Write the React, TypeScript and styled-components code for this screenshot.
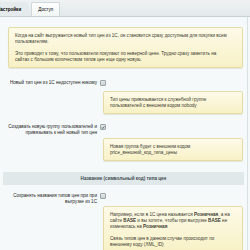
import React, { FC } from 'react'
import styled, { createGlobalStyle } from 'styled-components'

const Global = createGlobalStyle`
  html, body {
    margin: 0;
    padding: 0;
    background: #f5f9f9;
    font-family: "Liberation Sans", Arial, sans-serif;
  }
`

const Page = styled.div`
  width: 250px;
  height: 250px;
  overflow: hidden;
  background: #f5f9f9;
`

const TabBar = styled.div`
  display: flex;
  align-items: flex-end;
  gap: 3px;
  height: 16px;
  background: linear-gradient(#eef2f3, #e3e9eb);
  border-bottom: 1px solid #c7d1d4;
  overflow: hidden;
`

const Tab = styled.div<{ $active?: boolean }>`
  height: 13px;
  padding: 0 6px;
  display: flex;
  align-items: center;
  font-size: 4.6px;
  color: #000;
  white-space: nowrap;
  font-weight: ${p => (p.$active ? 'bold' : 'normal')};
  background: ${p => (p.$active ? '#e5ebec' : 'linear-gradient(#ffffff, #f1f4f5)')};
  border: 1px solid ${p => (p.$active ? 'transparent' : '#cfd8da')};
  border-bottom: none;
  border-radius: 2px 2px 0 0;
  &:first-child {
    margin-left: -10px;
  }
`

const Content = styled.div`
  width: 247px;
  padding-top: 10px;
  border-right: 1px solid #d8e1e3;
  min-height: 240px;
`

const Note = styled.div<{ $top?: number }>`
  margin-top: ${p => p.$top ?? 0}px;
  padding: 5px 6px 4px;
  background: linear-gradient(#fdfae8, #f8f1c6);
  border: 1px solid #e4dba6;
  border-radius: 2px;
  box-shadow: 0 1px 1px rgba(180, 170, 120, 0.25);
  font-size: 4.6px;
  line-height: 6px;
  white-space: nowrap;
  color: #3a3a30;
  p {
    margin: 0;
  }
  p + p {
    margin-top: 6px;
  }
`

const TopNote = styled(Note)`
  margin-left: 8px;
  width: 221px;
`

const Row = styled.div<{ $top: number }>`
  display: grid;
  grid-template-columns: 97px 1fr;
  column-gap: 3px;
  margin-top: ${p => p.$top}px;
`

const Label = styled.div`
  text-align: right;
  font-size: 4.6px;
  line-height: 6px;
  white-space: nowrap;
  color: #1e1e1e;
`

const HintNote = styled(Note)`
  grid-column: 2;
  margin-left: 3px;
  width: 126px;
`

const Check = styled.span`
  display: inline-flex;
  align-items: center;
  justify-content: center;
  width: 6px;
  height: 6px;
  box-sizing: border-box;
  border: 1px solid #9aa6aa;
  border-radius: 1px;
  background: linear-gradient(#e6eaeb, #c9d0d2);
  svg {
    display: block;
  }
`

const Heading = styled.div`
  margin: 11px 3px 0;
  height: 13px;
  display: flex;
  align-items: center;
  justify-content: center;
  background: #e0e8ea;
  font-size: 4.6px;
  font-weight: bold;
  color: #3f4c50;
`

const Checkbox: FC<{ checked?: boolean }> = ({ checked }) => (
  <Check>
    {checked && (
      <svg width="5" height="5" viewBox="0 0 10 10">
        <path d="M2 5 L4.2 7.5 L8.5 2" fill="none" stroke="#4a5256" strokeWidth="1.8" />
      </svg>
    )}
  </Check>
)

export default function App() {
  return (
    <Page>
      <Global />
      <TabBar>
        <Tab $active>Настройки</Tab>
        <Tab>Доступ</Tab>
      </TabBar>
      <Content>
        <TopNote>
          <p>
            Когда на сайт выгружается новый тип цен из 1С, он становится сразу доступным для покупки всем
            <br />
            пользователям.
          </p>
          <p>
            Это приводит к тому, что пользователи покупают по неверной цене. Трудно сразу заметить на
            <br />
            сайтах с большим количеством типов цен еще одну новую.
          </p>
        </TopNote>

        <Row $top={12}>
          <Label>Новый тип цен из 1С недоступен никому</Label>
          <Checkbox />
        </Row>
        <Row $top={5}>
          <HintNote>
            <p>
              Тип цены привязывается к служебной группе
              <br />
              пользователей с внешним кодом nobody
            </p>
          </HintNote>
        </Row>

        <Row $top={10}>
          <Label>
            Создавать новую группу пользователей и
            <br />
            привязывать к ней новый тип цен
          </Label>
          <Checkbox checked />
        </Row>
        <Row $top={2}>
          <HintNote>
            <p>
              Новая группа будет с внешним кодом
              <br />
              price_внешний_код_типа_цены
            </p>
          </HintNote>
        </Row>

        <Heading>Название (символьный код) типа цен</Heading>

        <Row $top={8}>
          <Label>
            Сохранять названия типов цен при при
            <br />
            выгрузке из 1С
          </Label>
          <Checkbox />
        </Row>
        <Row $top={1}>
          <HintNote>
            <p>
              Например, если в 1С цена называется <b>Розничная</b>, а на
              <br />
              сайте <b>BASE</b> и вы хотите, чтобы при выгрузке <b>BASE</b> не
              <br />
              изменилась на <b>Розничная</b>
            </p>
            <p>
              Связь типов цен в данном случае происходит по
              <br />
              внешнему коду (XML_ID)
            </p>
          </HintNote>
        </Row>
      </Content>
    </Page>
  )
}
